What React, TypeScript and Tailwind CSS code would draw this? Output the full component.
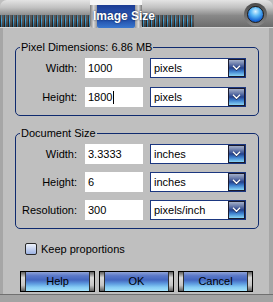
import React from 'react';

const grille =
  "bg-[linear-gradient(180deg,rgba(90,90,90,0.55)_0%,rgba(0,0,0,0)_45%,rgba(0,0,0,0.35)_100%),repeating-linear-gradient(90deg,#2b2b2b_0px,#2b2b2b_1px,#3fa6e0_1px,#3fa6e0_2px,#5a5a5a_2px,#5a5a5a_4px)]";

const Chevron = () => (
  <svg width="9" height="6" viewBox="0 0 9 6">
    <path d="M1 1.2 L4.5 4.6 L8 1.2" stroke="#1b2b55" strokeWidth="2.2" fill="none" />
    <path d="M1 0.8 L4.5 4.2 L8 0.8" stroke="#ffffff" strokeWidth="1.4" fill="none" />
  </svg>
);

const Field = ({ value, caret }: { value: string; caret?: boolean }) => (
  <div className="flex h-[20px] w-[58px] items-center bg-white pl-[3px] text-black">
    <span>{value}</span>
    {caret && <span className="ml-[1px] h-[13px] w-[1px] bg-black" />}
  </div>
);

const Select = ({ value }: { value: string }) => (
  <div className="flex h-[20px] w-[96px] border border-[#1b3780] bg-white">
    <span className="flex-1 pl-[3px] leading-[18px] text-black">{value}</span>
    <span className="flex w-[17px] items-center justify-center border border-[#1a1a2e] bg-[linear-gradient(180deg,#a3afc9_0%,#6a7cab_25%,#24428f_50%,#3f82cf_72%,#8ad6f6_100%)]">
      <Chevron />
    </span>
  </div>
);

const Row = ({ label, children }: { label: string; children: React.ReactNode }) => (
  <div className="flex items-center">
    <span className="w-[61px] text-right text-black">{label}</span>
    <div className="ml-[8px]">{children}</div>
  </div>
);

const Cap = () => (
  <span className="w-[4px] bg-[linear-gradient(180deg,#5c5c5c_0%,#d8d8d8_30%,#c4c4c4_70%,#5c5c5c_100%)]" />
);

const Btn = ({ label }: { label: string }) => (
  <button className="flex h-[21px] w-[75px] border border-black p-0">
    <Cap />
    <span className="flex flex-1 items-center justify-center border-x border-[#303030] bg-[linear-gradient(180deg,#8fa2d6_0%,#5a78c8_20%,#4467c0_42%,#5f9de0_62%,#86ccf4_80%,#a4e2fb_100%)] text-[11px] text-black">
      {label}
    </span>
    <Cap />
  </button>
);

export default function App() {
  return (
    <div className="flex h-[302px] w-[273px] flex-col bg-[#bfbfbf] font-['Liberation_Sans',Arial,sans-serif] text-[11px]">
      {/* title bar */}
      <div className="relative flex h-[28px] bg-[#bfbfbf]">
        <div className="flex w-[90px] flex-col">
          <div className="h-[15px] rounded-tl-[7px] bg-[linear-gradient(180deg,#e4e4e4_0%,#c2c2c2_50%,#8e8e8e_100%)]" />
          <div className={`h-[12px] ${grille}`} />
          <div className="h-[1px] bg-[#d6d6d6]" />
        </div>
        <div className="flex w-[52px] flex-col">
          <div className="h-[5px] bg-[#f6f6f6]" />
          <div className="flex flex-1">
            <span className="w-[7px] rounded-bl-[4px] bg-[linear-gradient(90deg,#7a7a7a,#d8d8d8_50%,#9a9a9a)]" />
            <span className="flex-1 rounded-b-[2px] bg-[linear-gradient(180deg,#1c3c92_0%,#2a55b5_45%,#1e4aa6_60%,#3a78cf_100%)]" />
            <span className="w-[7px] rounded-br-[4px] bg-[linear-gradient(90deg,#9a9a9a,#d8d8d8_50%,#7a7a7a)]" />
          </div>
        </div>
        <div className="flex flex-1 flex-col">
          <div className="h-[15px] rounded-tr-[7px] bg-[linear-gradient(180deg,#e4e4e4_0%,#c2c2c2_50%,#8e8e8e_100%)]" />
          <div className="flex h-[12px]">
            <div className={`w-[52px] ${grille}`} />
            <div className="flex-1 bg-[linear-gradient(180deg,#8a8a8a,#6c6c6c)]" />
          </div>
          <div className="h-[1px] bg-[#d6d6d6]" />
        </div>
        <span className="absolute left-[93px] top-[8px] text-[12px] font-bold leading-[16px] text-white [text-shadow:0_0_2px_#0a1a40]">
          Image Size
        </span>
        <span className="absolute left-[244px] top-[3px] flex h-[23px] w-[23px] items-center justify-center rounded-full bg-[linear-gradient(180deg,#4a4a4a,#8a8a8a)]">
          <span className="h-[17px] w-[17px] rounded-full border border-[#1a1a1a] bg-[radial-gradient(circle_at_50%_30%,#d8f2ff_0%,#5ab8f5_35%,#1a6ad6_70%,#0c3a9a_100%)]" />
        </span>
      </div>

      {/* body */}
      <div className="flex flex-1 flex-col border-l-[3px] border-r-[4px] border-l-[#a6a6a6] border-r-[#a6a6a6]">
        <fieldset className="ml-[12px] mt-[13px] w-[244px] rounded-[5px] border border-[#0f2a6e] pb-[8px] pt-[5px]">
          <legend className="ml-[4px] px-[1px] leading-[12px] text-black">Pixel Dimensions: 6.86 MB</legend>
          <div className="flex flex-col gap-[9px]">
            <Row label="Width:">
              <div className="flex gap-[7px]">
                <Field value="1000" />
                <Select value="pixels" />
              </div>
            </Row>
            <Row label="Height:">
              <div className="flex gap-[7px]">
                <Field value="1800" caret />
                <Select value="pixels" />
              </div>
            </Row>
          </div>
        </fieldset>

        <fieldset className="ml-[12px] mt-[11px] w-[244px] rounded-[5px] border border-[#0f2a6e] pb-[8px] pt-[5px]">
          <legend className="ml-[4px] px-[1px] leading-[12px] text-black">Document Size</legend>
          <div className="flex flex-col gap-[8px]">
            <Row label="Width:">
              <div className="flex gap-[7px]">
                <Field value="3.3333" />
                <Select value="inches" />
              </div>
            </Row>
            <Row label="Height:">
              <div className="flex gap-[7px]">
                <Field value="6" />
                <Select value="inches" />
              </div>
            </Row>
            <Row label="Resolution:">
              <div className="flex gap-[7px]">
                <Field value="300" />
                <Select value="pixels/inch" />
              </div>
            </Row>
          </div>
        </fieldset>

        <label className="ml-[22px] mt-[12px] flex items-center gap-[4px] text-black">
          <span className="h-[12px] w-[12px] rounded-[2px] border border-[#2a2a2a] bg-[linear-gradient(180deg,#eef2fb,#9db3e3)]" />
          Keep proportions
        </label>

        <div className="ml-[17px] mt-[13px] flex gap-[4px]">
          <Btn label="Help" />
          <Btn label="OK" />
          <Btn label="Cancel" />
        </div>
      </div>
      <div className="h-[8px] border-t border-[#707070] bg-[#a3a3a3]" />
    </div>
  );
}
